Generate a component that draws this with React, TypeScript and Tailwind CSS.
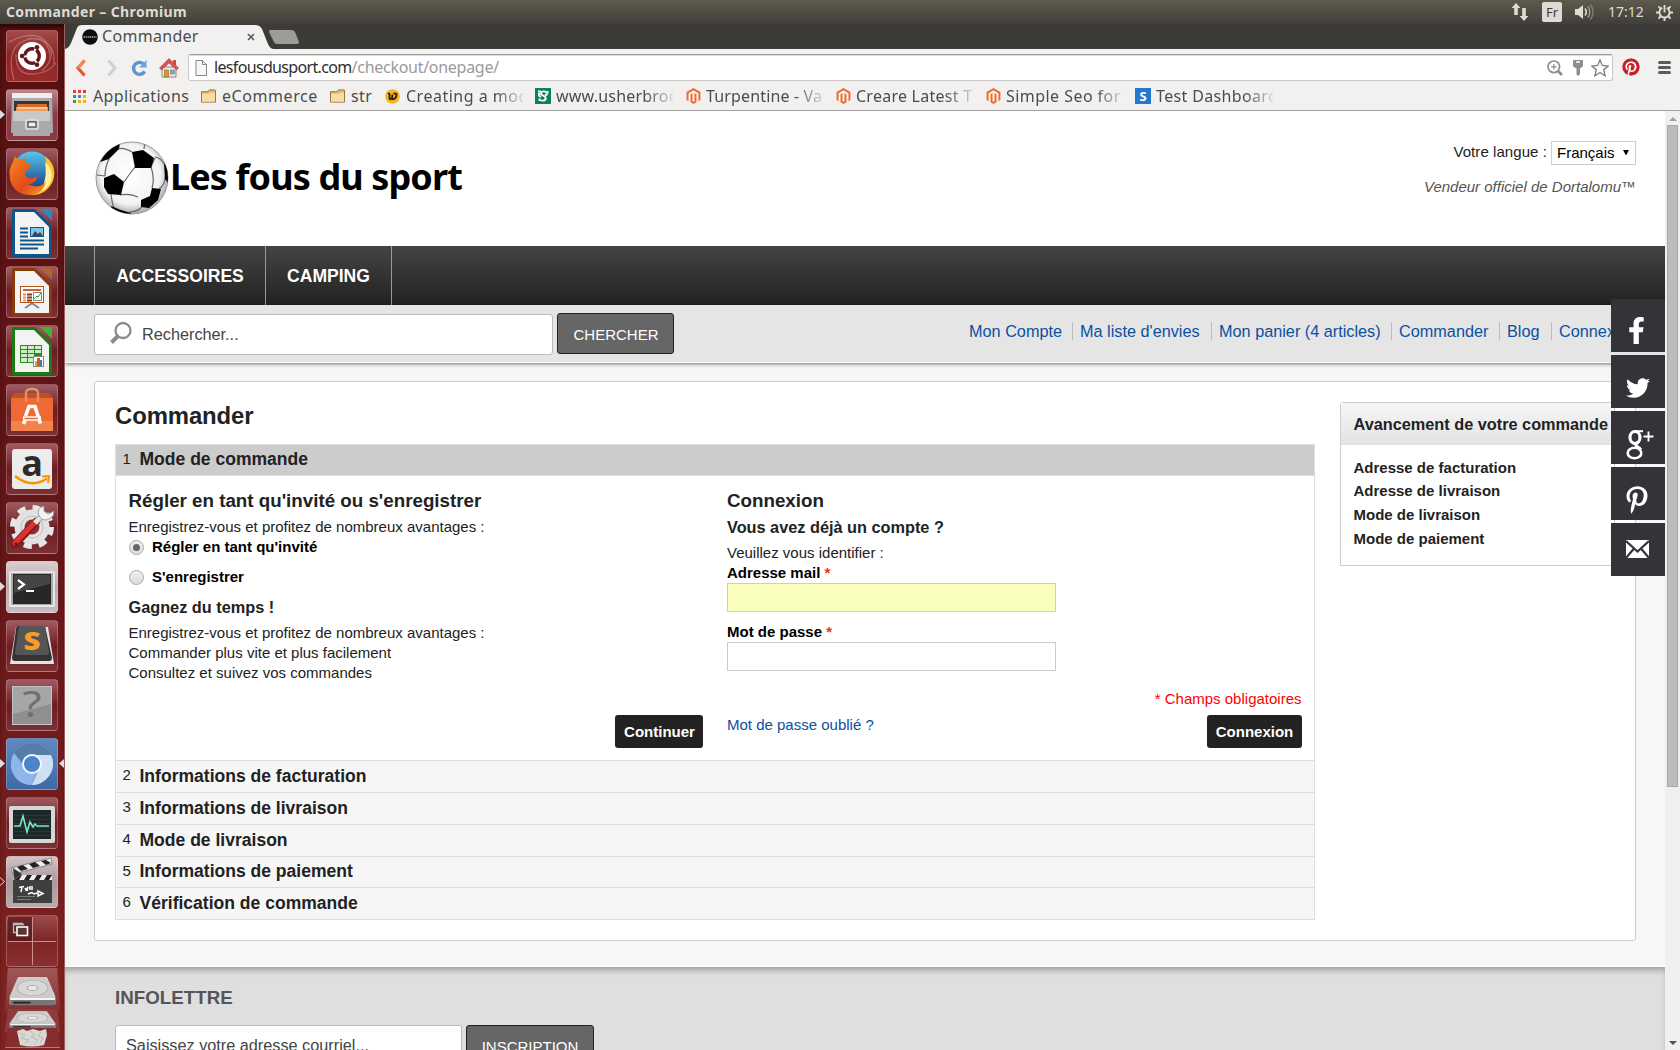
import React from "react";
import {
  FaFacebookF,
  FaMagento,
  FaPinterest,
  FaPinterestP,
  FaTwitter,
} from "react-icons/fa";

const ui = "font-['Noto_Sans',sans-serif]";

function Tile({ bg, children }: { bg?: string; children: React.ReactNode }) {
  return (
    <div
      className={
        "relative h-[52px] w-[52px] shrink-0 overflow-hidden rounded-[4px] border border-white/20 " +
        (bg ?? "bg-linear-to-b from-[#a05a62] via-[#6e1d22] to-[#7a3034]")
      }
    >
      <svg viewBox="0 0 52 52" className="-m-px block h-[52px] w-[52px]">
        {children}
      </svg>
    </div>
  );
}

function OfficeDoc({ dark, light, children }: { dark: string; light: string; children: React.ReactNode }) {
  return (
    <>
      <path d="M8 2H29L46 19V48Q46 50 44 50H8Q6 50 6 48V4Q6 2 8 2Z" fill={dark} />
      <path d="M9 5H28L43 20V47H9Z" fill="#f3f3f3" />
      <path d="M34 2H44Q46 2 46 4V14Z" fill={light} />
      {children}
    </>
  );
}

function Drive() {
  return (
    <>
      <path d="M12 3H40L48 25V34H4V25Z" fill="#cbcbcb" stroke="#e4e4e4" strokeWidth=".8" />
      <ellipse cx="26" cy="15" rx="15" ry="9" fill="#d8d8d8" stroke="#b4b4b4" />
      <ellipse cx="26" cy="15" rx="5" ry="3" fill="#e8e8e8" stroke="#a2a2a2" />
      <path d="M4 26H48V35H4Z" fill="#777" />
      <path d="M4 26H48V29H4Z" fill="#f4f4f4" />
      <path d="M7 31H24V33H7Z" fill="#222" />
    </>
  );
}

function Launcher() {
  return (
    <div className="relative flex w-[65px] shrink-0 flex-col items-center gap-[7px] overflow-hidden border-r border-[#9b6163] bg-linear-to-b from-[#54100f] via-[#651619] to-[#812321] pt-[6px] shadow-[inset_0_5px_5px_-2px_rgba(20,0,0,0.7)]">
      <Tile bg="bg-linear-to-b from-[#a34a4b] via-[#8d2426] to-[#9a2b2d]">
        <g fill="none" stroke="#fff" opacity=".28" strokeWidth="1.2">
          <path d="M8 50Q-2 14 24 9Q44 6 44 30" />
          <path d="M3 12Q30-2 42 14Q51 27 36 41" />
          <path d="M22 8Q50 8 48 34" />
          <path d="M10 24Q9 46 29 44Q42 43 50 33" />
        </g>
        <circle cx="26" cy="26" r="14" fill="#fff" />
        <circle cx="26" cy="26" r="7.3" fill="none" stroke="#641619" strokeWidth="3.4" strokeDasharray="13.3 2" strokeDashoffset="-8" />
        <circle cx="16" cy="26" r="2.3" fill="#641619" />
        <circle cx="31" cy="17.3" r="2.3" fill="#641619" />
        <circle cx="31" cy="34.7" r="2.3" fill="#641619" />
      </Tile>
      <Tile bg="bg-linear-to-b from-[#bb858c] via-[#8b3a44] to-[#8b3a44]">
        <path d="M6 5H46L47 44H5Z" fill="#aaa" />
        <path d="M6 4H46V9H6Z" fill="#eee" />
        <path d="M8 12H43V23H8Z" fill="#353535" />
        <path d="M11 15H41V18H11Z" fill="#d96a27" />
        <path d="M10 18H42V22H10Z" fill="#f39b55" />
        <path d="M12 19H41" stroke="#fff3df" />
        <path d="M7 22H44V47H7Z" fill="#aaa" />
        <path d="M7 22H44V32H7Z" fill="#c9c9c9" />
        <rect x="20" y="31" width="12" height="9" rx="1.5" fill="#aaa" stroke="#e2e2e2" strokeWidth="1.6" />
        <rect x="22" y="33" width="8" height="5" fill="#eee" stroke="#333" />
      </Tile>
      <Tile>
        <defs>
          <linearGradient id="fox" x1="0" y1="0" x2="1" y2="1">
            <stop offset="0" stopColor="#f38b1d" />
            <stop offset=".6" stopColor="#e5481c" />
            <stop offset="1" stopColor="#f6a520" />
          </linearGradient>
          <linearGradient id="globe" x1="0" y1="0" x2="0" y2="1">
            <stop offset="0" stopColor="#58c7ee" />
            <stop offset="1" stopColor="#163a82" />
          </linearGradient>
        </defs>
        <circle cx="26" cy="23" r="19.5" fill="url(#globe)" />
        <path d="M39 8Q52 18 47 33Q40 48 24 47Q38 42 41 30Q42 22 39 8Z" fill="#fbc62c" />
        <path d="M39 14Q48 21 45 33Q42 41 33 44Q42 33 39 14Z" fill="#fff09c" />
        <path d="M9 8Q11 12 16 12L20 9L20 15Q24 16 26 19L20 22Q17 28 23 30Q27 31 31 28Q30 36 22 36Q34 42 40 33Q37 47 23 47Q8 46 4 32Q2 20 7 14Z" fill="url(#fox)" />
      </Tile>
      <Tile>
        <OfficeDoc dark="#0d5689" light="#2e88bd">
          <path d="M14 21.5H22M14 25.5H22M14 29.5H22M14 33.5H38M14 37.5H38M14 41.5H32" stroke="#0d5689" strokeWidth="2" />
          <rect x="24.5" y="20.5" width="13" height="9" fill="#7bc7e8" stroke="#0d5689" />
          <path d="M26 29L29 24L32 27L34 25L37 29Z" fill="#444" />
        </OfficeDoc>
      </Tile>
      <Tile>
        <OfficeDoc dark="#8a3a0c" light="#b0632f">
          <rect x="14.5" y="20.5" width="23" height="16" fill="#fff" stroke="#b4511c" />
          <path d="M17 24H35" stroke="#d36229" strokeWidth="2" />
          <path d="M17 28.5H20M17 31.5H20M17 34.5H20" stroke="#e0926a" strokeWidth="2" />
          <path d="M21 28.5H26M21 31.5H26M21 34.5H26" stroke="#8a3a0c" strokeWidth="2" />
          <rect x="27.5" y="26.5" width="8" height="8" fill="#fff" stroke="#888" />
          <path d="M28 33L31 30L32 31L35 27" stroke="#2d9c22" fill="none" />
          <path d="M25 37V38L19 42M27 37V38L33 42" stroke="#888" strokeWidth="2" fill="none" />
        </OfficeDoc>
      </Tile>
      <Tile>
        <OfficeDoc dark="#1b7a12" light="#41b232">
          <rect x="14" y="20" width="22" height="18" fill="#2b8d21" />
          <g fill="#cdeec4">
            <path d="M15 21h6v3h-6zM22 21h6v3h-6zM29 21h6v3h-6zM15 25h6v3h-6zM22 25h6v3h-6zM29 25h6v3h-6zM15 29h6v3h-6zM22 29h6v3h-6zM15 33h6v4h-6zM22 33h6v4h-6z" />
          </g>
          <rect x="27.5" y="31.5" width="10" height="10" fill="#fff" stroke="#888" />
          <path d="M29 36H31V41H29Z" fill="#e9a321" />
          <path d="M31 33H34V41H31Z" fill="#d6552b" />
          <path d="M34 35H36V41H34Z" fill="#3180c4" />
        </OfficeDoc>
      </Tile>
      <Tile>
        <path d="M5 14L8 9H43L47 14Z" fill="#c04f22" />
        <path d="M5 14H47V47H5Z" fill="#ed6a35" />
        <path d="M5 37H47V47H5Z" fill="#f4824e" />
        <path d="M20 18V9Q20 5 26 5Q32 5 32 9V18" fill="none" stroke="#e98e6a" strokeWidth="2.4" />
        <path d="M19.500 32L23 22.500H29L34.500 39.500M17.500 40L19 36" fill="none" stroke="#fff" strokeWidth="3.6" />
        <path d="M17 34.500H35" stroke="#fff" strokeWidth="4.400" />
        <path d="M18.500 34.500H32" stroke="#ed6a35" strokeWidth="1.300" />
      </Tile>
      <Tile>
        <rect x="6" y="6" width="40" height="40" rx="3" fill="#ececec" />
        <text x="26" y="33" textAnchor="middle" fontFamily="Open Sans, sans-serif" fontWeight="700" fontSize="36" fill="#2b2b2b">a</text>
        <path d="M9 33Q25 46 41 35.500" fill="none" stroke="#f79400" strokeWidth="2.4" />
        <path d="M36 33.500L43 33L42 40" fill="none" stroke="#f79400" strokeWidth="2" />
      </Tile>
      <Tile>
        <circle cx="26" cy="25" r="19" fill="none" stroke="#e6e6e6" strokeWidth="6" strokeDasharray="8 6.920" />
        <circle cx="26" cy="25" r="12.500" fill="#8b3034" stroke="#e2e2e2" strokeWidth="10" />
        <circle cx="26" cy="25" r="11" fill="none" stroke="#bdbdbd" strokeWidth="1" />
        <path d="M9 42L30 20" stroke="#8c1717" strokeWidth="8" strokeLinecap="round" />
        <path d="M9 41L30 19" stroke="#d93434" strokeWidth="5" strokeLinecap="round" />
        <path d="M29 21L36 14" stroke="#999" strokeWidth="6" />
        <path d="M29 21L36 14" stroke="#e6e6e6" strokeWidth="4.500" />
        <path d="M38 4Q30 6 33 14Q37 21 45 16Q48 14 48 9L42 12L38 9Z" fill="#f2f2f2" stroke="#8f8f8f" strokeWidth=".8" />
        <circle cx="10" cy="42" r="1.500" fill="#6a1010" />
      </Tile>
      <Tile bg="bg-linear-to-b from-[#d9cdd0] via-[#b8a8ab] to-[#c8bcbe]">
        <rect x="3" y="10" width="46" height="36" rx="2" fill="#e6e6e6" />
        <rect x="5" y="12" width="42" height="32" fill="#aaa" />
        <rect x="7" y="13" width="38" height="30" fill="#272727" />
        <path d="M8 14H44V23L8 32Z" fill="#454545" />
        <path d="M12 19L18 23.5L12 28" stroke="#fff" strokeWidth="2.2" fill="none" />
        <path d="M20 30H28" stroke="#fff" strokeWidth="2" />
      </Tile>
      <Tile>
        <path d="M10 7H42L48 44H4Z" fill="#e4e4e4" />
        <path d="M13 6H39L46 38Q46 41 43 41H9Q6 41 6 38L10 9Q10 6 13 6Z" fill="#343434" />
        <path d="M13 6H39L43 33Q43 35 41 35H11Q9 35 9 33Z" fill="#555" />
        <text x="26" y="29.500" textAnchor="middle" fontFamily="Open Sans, sans-serif" fontWeight="800" fontSize="24" textLength="17" lengthAdjust="spacingAndGlyphs" fill="#fb9b2b">S</text>
      </Tile>
      <Tile>
        <rect x="6.500" y="7.500" width="39" height="38" fill="#8f8f8f" stroke="#c3c3c3" />
        <path d="M7 8H45V25L7 35Z" fill="#a6a6a6" />
        <text x="26" y="38" textAnchor="middle" fontFamily="Noto Sans, sans-serif" fontSize="36" textLength="19" lengthAdjust="spacingAndGlyphs" fill="#6f6f6f">?</text>
      </Tile>
      <Tile bg="bg-linear-to-b from-[#6288bd] to-[#3e6ba6]">
        <circle cx="26" cy="26" r="21" fill="#82ace2" />
        <path d="M8 15Q15 5 26 5Q38 5 45 17H26L17 26Z" fill="#527ea8" />
        <path d="M26 17H45Q50 28 43 38Q36 47 26 47L34 30Z" fill="#cfe0f5" />
        <path d="M8 15L17 29Q20 36 29 35L25 47Q9 46 5 30Q4 22 8 15Z" fill="#8fb6ea" />
        <circle cx="26" cy="26" r="9" fill="#4c84cb" stroke="#f4f7fc" strokeWidth="2" />
      </Tile>
      <Tile>
        <rect x="3" y="9" width="46" height="37" rx="2" fill="#d6d6d6" />
        <rect x="7" y="13" width="38" height="29" fill="#1e2827" />
        <path d="M8 18.5H44M8 22.500H44M8 26.500H44M8 30.500H44M8 34.500H44M8 38.500H44" stroke="#2e3f3c" strokeWidth=".7" />
        <path d="M8 29H14L17 19L21 35L24 25L27 30L29 27L31 29H43" fill="none" stroke="#76eac7" strokeWidth="1.6" />
      </Tile>
      <Tile bg="bg-linear-to-b from-[#d3c1c5] via-[#a9999c] to-[#b9aaac]">
        <path d="M5 12L45 2L46 8L7 18Z" fill="#eee" stroke="#555" strokeWidth=".6" />
        <path d="M11 11L17 9L22 13L15 15ZM23 8L29 6L34 10L27 12ZM35 5L40 4L45 7L40 9Z" fill="#222" />
        <rect x="7" y="19" width="39" height="28" fill="#3f3f3f" />
        <path d="M7 19H46V24H7Z" fill="#eee" />
        <path d="M11 19H16L13 24H8ZM21 19H26L23 24H18ZM31 19H36L33 24H28ZM41 19H46L43 24H38Z" fill="#222" />
        <path d="M7 12L16 18L8 24Z" fill="#333" stroke="#888" strokeWidth=".6" />
        <path d="M13 31.500L18 30.500M16 31L15 36M19 32L20 34L22 31L21 35M24 30V34M26 30V34M22 38L26 36.500L28 38L31 37M32 35V40L37 37.500Z" fill="none" stroke="#fff" strokeWidth="1.500" />
        <path d="M11 40.500H29M11 43.500H25" stroke="#888" strokeWidth=".8" />
      </Tile>
      <Tile bg="bg-linear-to-b from-[#9a4a4c] via-[#7c2527] to-[#8b2f30]">
        <rect x="2" y="2" width="24" height="25" fill="#4d1518" opacity=".65" />
        <path d="M26.500 2V50M2 26.500H50" stroke="#d18e8e" strokeWidth="1" />
        <path d="M17 8.500H7.500V17.500H10M7 9.500H18" stroke="#bbb" strokeWidth="1.3" fill="none" />
        <rect x="11" y="12" width="10.500" height="8.500" fill="#5a3335" stroke="#fff" strokeWidth="1.6" />
      </Tile>

      <div className="absolute top-[944px] left-[5px] h-[43px] w-[55px] rounded-t-[4px] bg-linear-to-b from-[#a05858] to-[#862e2f] [clip-path:polygon(5%_0,95%_0,100%_100%,0_100%)]">
        <svg viewBox="0 0 52 36" preserveAspectRatio="none" className="mx-auto mt-[7px] block h-[31px] w-[53px]"><Drive /></svg>
      </div>
      <div className="absolute top-[985px] left-[5px] h-[23px] w-[55px] bg-[#8c3c3d] [clip-path:polygon(5%_0,95%_0,100%_100%,0_100%)]">
        <svg viewBox="0 0 52 36" preserveAspectRatio="none" className="mx-auto mt-[1px] block h-[19px] w-[53px]"><Drive /></svg>
      </div>
      <div className="absolute top-[1004px] left-[5px] h-[20px] w-[55px] border-b border-[#bb7777] bg-[#862e2f] [clip-path:polygon(5%_0,95%_0,100%_100%,0_100%)]">
        <svg viewBox="0 0 55 20" className="block h-[20px] w-[55px]">
          <path d="M12 3L18 1L22 3L28 1L35 3L41 1L42 7L39 17Q27 20 15 17Z" fill="#d8d8d4" />
          <path d="M14 5L20 7L16 10L24 12L20 15M25 3L30 7L26 9L33 12L29 16M36 4L33 8L38 10L35 15" fill="none" stroke="#b9b9b5" strokeWidth="1" />
        </svg>
      </div>

      <svg viewBox="0 0 65 1026" className="pointer-events-none absolute top-0 left-0 h-[1026px] w-[65px]" fill="#dcdcdc">
        <path d="M0 86L5 90.500L0 95Z" />
        <path d="M0 558L5 562.500L0 567Z" />
        <path d="M0 735L5 739.500L0 744Z" />
        <path d="M64 735L59 739.500L64 744Z" />
        <path d="M0 853.500L4.500 857.500L0 861.500" fill="none" stroke="#dcdcdc" />
      </svg>
    </div>
  );
}

function TopPanel() {
  return (
    <div className={"flex h-[24px] shrink-0 items-center justify-between bg-linear-to-b from-[#5d5a4e] to-[#403f3a] pr-[7px] pl-[6px] text-[#dfdbd2] " + ui}>
      <span className="text-[14px] leading-[24px] font-bold tracking-[0.37px]">Commander – Chromium</span>
      <div className="flex items-center">
        <svg viewBox="0 0 18 18" className="mr-[13px] h-[18px] w-[18px]" fill="#dfdbd2">
          <path d="M5 0L9.500 5H6.800V12H3.200V5H.5ZM13 18L8.500 13H11.200V5H14.800V13H17.500Z" />
        </svg>
        <span className="mr-[13px] flex h-[20px] w-[20px] items-center justify-center rounded-[2px] bg-[#dfdbd2] text-[13px] leading-none text-[#3c3b37]">Fr</span>
        <svg viewBox="0 0 20 18" className="mr-[13px] h-[18px] w-[20px]">
          <path d="M0 6H3L8 2V16L3 12H0Z" fill="#dfdbd2" />
          <path d="M10 5.500Q12.500 9 10 12.500" fill="none" stroke="#dfdbd2" strokeWidth="1.6" />
          <path d="M13 3.500Q16.500 9 13 14.500" fill="none" stroke="#a19e94" strokeWidth="1.4" />
          <path d="M15.500 1.500Q20.500 9 15.500 16.500" fill="none" stroke="#817e75" strokeWidth="1.4" />
        </svg>
        <span className="mr-[13px] w-[35px] text-[14px] leading-[24px] whitespace-nowrap">17:12</span>
        <svg viewBox="0 0 18 18" className="h-[17px] w-[17px]" fill="none" stroke="#dfdbd2">
          <path d="M6.500 4.100A5.400 5.400 0 1 0 11.500 4.100" strokeWidth="2" />
          <path d="M9 1V9" strokeWidth="2" />
          <path d="M9 14.500V18M0 9H3.500M14.500 9H18M2.600 2.600L5 5M15.400 2.600L13 5M2.600 15.400L5 13M15.400 15.400L13 13" strokeWidth="2" />
        </svg>
      </div>
    </div>
  );
}

function TabStrip() {
  return (
    <div className={"relative flex h-[25px] shrink-0 bg-[#3c3b37] " + ui}>
      <svg viewBox="0 0 240 25" className="absolute top-0 left-0 h-[25px] w-[240px]">
        <path d="M0 25Q4 24 6 19L12 4Q13 1 17 1H190Q195 1 197 5L203 20Q205 25 209 25Z" fill="#f2f1f0" />
        <path d="M205 6H226Q229 6 230 8L234 18Q234 20 232 20H212Q210 20 209 18L204 8Q204 6 205 6Z" fill="#9d9c99" />
      </svg>
      <div className="relative flex h-[25px] w-[200px] items-center pl-[17px]">
        <svg viewBox="0 0 16 16" className="h-[16px] w-[16px]">
          <circle cx="8" cy="8" r="7.800" fill="#0a0f0c" />
          <path d="M1.500 8H14.500" stroke="#7d8480" strokeWidth="2" strokeDasharray="1.500 .6" />
        </svg>
        <span className="mt-[-1px] ml-[4px] w-[145px] text-[16px] leading-[24px] tracking-[0.3px] text-[#4c4c4c]">Commander</span>
        <svg viewBox="0 0 8 8" className="mt-px h-[8px] w-[8px] shrink-0">
          <path d="M1 1L7 7M7 1L1 7" stroke="#5c5c5c" strokeWidth="1.700" />
        </svg>
      </div>
    </div>
  );
}

function Toolbar() {
  return (
    <div className={"flex h-[35px] shrink-0 items-start bg-[#f2f1f0] pt-[5px] " + ui}>
      <div className="flex h-[27px] w-[123px] shrink-0 items-center pl-[10px]">
        <svg viewBox="0 0 12 18" className="h-[18px] w-[12px]">
          <path d="M9.500 1.500L3 9L9.500 16.500" fill="none" stroke="#e4582b" strokeWidth="3.200" />
          <path d="M9.500 1.500L3 9" fill="none" stroke="#f0904c" strokeWidth="2.600" />
        </svg>
        <svg viewBox="0 0 12 18" className="ml-[19px] h-[18px] w-[12px]">
          <path d="M2.500 1.500L9 9L2.500 16.500" fill="none" stroke="#d0cfcd" strokeWidth="3" />
        </svg>
        <svg viewBox="0 0 18 18" className="ml-[13px] h-[18px] w-[17px]">
          <path d="M14.500 12.500A6.300 6.300 0 1 1 13 4.500" fill="none" stroke="#5b94d2" strokeWidth="3.600" />
          <path d="M16.500 .5V8.500H8.500Z" fill="#6da5de" />
        </svg>
        <svg viewBox="0 0 20 20" className="ml-[11px] h-[20px] w-[20px]">
          <path d="M3 9H17V19H3Z" fill="#f0ede8" stroke="#8c8680" />
          <path d="M14 2H17V7H14Z" fill="#c94c48" />
          <path d="M10 .5L19.500 10L17.500 12L10 5L2.500 12L.5 10Z" fill="#d9534f" stroke="#a83a36" strokeWidth=".6" />
          <rect x="5.500" y="12" width="4" height="7" fill="#d89c2c" stroke="#8c6316" strokeWidth=".6" />
          <rect x="11.500" y="12" width="4" height="4" fill="#7da7d9" stroke="#777" strokeWidth=".6" />
        </svg>
      </div>
      <div className="flex h-[27px] w-[1425px] shrink-0 items-center rounded-[3px] border border-[#c9c8c6] border-t-[#9c9b99] bg-white pr-[3px] pl-[6px] shadow-[inset_0_1px_0_#dedede]">
        <svg viewBox="0 0 12 16" className="h-[16px] w-[12px]">
          <path d="M1 .5H7.500L11.500 4.500V15.500H1Z" fill="#f7f7f7" stroke="#878787" />
          <path d="M7.500 .5V4.500H11.500" fill="none" stroke="#878787" />
        </svg>
        <span className="ml-[7px] grow text-[16px] leading-[25px] text-[#9a9a9a]">
          <span className="tracking-[-0.66px] text-[#2e2e2e]">lesfousdusport.com</span>
          <span className="tracking-[-0.28px]">/checkout/onepage/</span>
        </span>
        <svg viewBox="0 0 16 16" className="mr-[10px] h-[16px] w-[16px]" fill="none" stroke="#8c8c8c">
          <circle cx="6.800" cy="6.800" r="5.800" strokeWidth="1.700" />
          <path d="M11 11L15 15" strokeWidth="2.600" />
          <path d="M4 6.800H9.600M6.800 4V9.600" strokeWidth="1.200" />
        </svg>
        <svg viewBox="0 0 10 16" className="mr-[8px] h-[16px] w-[10px]">
          <path d="M0 1Q0 0 1 0H9Q10 0 10 1V6L8 8H7V14L5 16L3.500 14.500V8H2L0 6Z" fill="#8c8c8c" />
          <path d="M3 2H7" stroke="#fff" strokeWidth="1.500" />
        </svg>
        <svg viewBox="0 0 18 18" className="h-[18px] w-[18px]">
          <path d="M9 1L11.300 6.500L17.200 7L12.700 10.800L14.100 16.700L9 13.500L3.900 16.700L5.300 10.800L.8 7L6.700 6.500Z" fill="none" stroke="#7b7b7b" strokeWidth="1.300" />
        </svg>
      </div>
      <FaPinterest className="mt-[4px] ml-[9px] h-[18px] w-[18px] shrink-0 rounded-full bg-white text-[#cb2027]" />
      <div className="mt-[7px] ml-[18px] flex h-[13px] w-[13px] flex-col justify-between">
        <span className="h-[3px] rounded-sm bg-[#5b5b5b]" />
        <span className="h-[3px] rounded-sm bg-[#5b5b5b]" />
        <span className="h-[3px] rounded-sm bg-[#5b5b5b]" />
      </div>
    </div>
  );
}

function FolderIcon() {
  return (
    <svg viewBox="0 0 16 14" className="h-[14px] w-[15px] shrink-0">
      <path d="M.5 2.500V13.500H15.500V1.500Q15.500 .5 14.500 .5H9L7.500 2.500Z" fill="#e9bd77" stroke="#86683a" />
      <path d="M1 4.500H10L11 3.500H15V13H1Z" fill="#fbdca3" />
    </svg>
  );
}

const fade = "overflow-hidden [mask-image:linear-gradient(to_right,black_76%,transparent_104%)]";

function Bookmark({ icon, label, gap, width, fit = "", fades = true }: { icon: React.ReactNode; label: string; gap: string; width: string; fit?: string; fades?: boolean }) {
  return (
    <div className={"flex shrink-0 items-center " + gap}>
      {icon}
      <span className={"text-[16px] leading-[24px] whitespace-nowrap " + width + " " + fit + " " + (fades ? fade : "")}>{label}</span>
    </div>
  );
}

function BookmarksBar() {
  const magento = <FaMagento className="mr-[5px] h-[16px] w-[15px] shrink-0 text-[#f06a2e]" />;
  return (
    <div className={"flex h-[27px] shrink-0 items-start border-b border-[#a3a2a0] bg-[#f2f1f0] pl-[8px] text-[#4c4c4c] " + ui}>
      <Bookmark
        gap=""
        width="w-[108px]"
        fit="tracking-[0.35px]"
        fades={false}
        label="Applications"
        icon={
          <svg viewBox="0 0 13 13" className="mr-[7px] h-[13px] w-[13px] shrink-0">
            <path d="M0 0h3v3H0zM5 0h3v3H5zM10 0h3v3h-3z" fill="#ea3c37" />
            <path d="M0 5h3v3H0z" fill="#2aa35a" />
            <path d="M5 5h3v3H5z" fill="#2f86f6" />
            <path d="M10 5h3v3h-3z" fill="#f6b300" />
            <path d="M0 10h3v3H0z" fill="#2aa35a" />
            <path d="M5 10h3v3H5zM10 10h3v3h-3z" fill="#f6b300" />
          </svg>
        }
      />
      <Bookmark gap="gap-[6px]" width="w-[108px]" fit="tracking-[0.57px]" fades={false} label="eCommerce" icon={<FolderIcon />} />
      <Bookmark gap="gap-[6px]" width="w-[34px]" fit="tracking-[0.4px]" fades={false} label="str" icon={<FolderIcon />} />
      <Bookmark
        gap="gap-[6px]"
        width="w-[117px]"
        fit="tracking-[0.5px]"
        label="Creating a mod"
        icon={
          <svg viewBox="0 0 16 16" className="h-[15px] w-[15px] shrink-0">
            <circle cx="8" cy="8" r="7.800" fill="#fbb51c" />
            <path d="M3 5Q5 4 5 7Q4 11 6 11Q8 10 8 6Q7 11 9 11Q13 9 12 5M9 5Q11 4 13 6" fill="none" stroke="#222" strokeWidth="1.900" />
          </svg>
        }
      />
      <Bookmark
        gap="ml-[12px] gap-[5px]"
        width="w-[117px]"
        fit="tracking-[0.2px]"
        label="www.usherbroo"
        icon={
          <svg viewBox="0 0 16 16" className="h-[16px] w-[16px] shrink-0">
            <path d="M0 0H16V16H0Z" fill="#0b8358" />
            <path d="M11.500 4.500Q9 2.500 6.500 4Q5 6 8 7.500Q11.500 9 10.500 11.500Q8.500 13.500 5 12M3 3.500H6M4 5V7.500L6 9M12.500 3V6M4.500 10.500V13M10 7L12.500 6.500" fill="none" stroke="#fff" strokeWidth="1.900" />
          </svg>
        }
      />
      <Bookmark gap="ml-[13px]" width="w-[117px]" fit="tracking-[0.15px]" label="Turpentine - Va" icon={magento} />
      <Bookmark gap="ml-[13px]" width="w-[117px]" fit="tracking-[0.25px]" label="Creare Latest T" icon={magento} />
      <Bookmark gap="ml-[13px]" width="w-[117px]" fit="tracking-[0.45px]" label="Simple Seo for" icon={magento} />
      <Bookmark
        gap="ml-[12px] gap-[5px]"
        width="w-[117px]"
        fit="tracking-[0.35px]"
        label="Test Dashboard"
        icon={
          <span className="flex h-[16px] w-[16px] shrink-0 items-center justify-center bg-[#2479cc] text-[13px] leading-none font-bold text-white">S</span>
        }
      />
    </div>
  );
}

function Ball() {
  return (
    <svg viewBox="0 0 74 74" className="ml-px h-[74px] w-[74px] shrink-0">
      <defs>
        <radialGradient id="ball" cx=".48" cy=".45" r=".55">
          <stop offset="0" stopColor="#fff" />
          <stop offset=".75" stopColor="#f3f3f3" />
          <stop offset="1" stopColor="#a9a9a9" />
        </radialGradient>
        <clipPath id="ballclip">
          <circle cx="37" cy="37" r="36" />
        </clipPath>
      </defs>
      <circle cx="37" cy="37" r="36" fill="url(#ball)" stroke="#8a8a8a" strokeWidth=".8" />
      <g clipPath="url(#ballclip)">
        <path
          d="M37 11Q28 6 24 8M14 18Q10 26 10 35M49 8L50 0M40 26Q36 31 29 41M56 26L60 17M56 26Q60 37 57 47M60 16Q66 17 69 23M10 35L2 34M16 53Q17 62 19 67M43 56Q35 52 25 54M47 66Q42 71 34 71M64 48Q70 44 70 36"
          fill="none"
          stroke="#666"
          strokeWidth="1.200"
        />
        <path d="M37 11L48 9L59 17L56 27L40 27Z" />
        <path d="M9 37L19 33L29 41L26 54L13 53L9 46Z" />
        <path d="M57 47L66 48L63 59L54 67L46 66L46 59L55 55Z" />
        <path d="M5 21Q12 8 25 2L24 8L14 18L8 20Z" />
        <path d="M16 65L26 69L36 72V75H18Z" />
        <path d="M69 22L75 30V45L70 38Z" />
      </g>
    </svg>
  );
}

function SiteHeader() {
  return (
    <div className="flex h-[135px] shrink-0 justify-between bg-white pr-[29px] pl-[29px]">
      <div className="flex h-[74px] pt-[30px]">
        <Ball />
        <div className="mt-[11px] ml-px h-[50px] text-[36px] leading-[50px] font-bold tracking-[-0.88px] whitespace-nowrap text-black font-['Noto_Sans',sans-serif]">
          Les fous du sport
        </div>
      </div>
      <div className="flex flex-col items-end pt-[30px] text-[15px] text-[#222]">
        <div className="flex h-[24px] items-center">
          <span className="mt-[-2px] mr-[4px] leading-[22px] tracking-[0.07px]">Votre langue :</span>
          <span className="flex h-[24px] w-[85px] items-center justify-between border border-[#ccc] pr-[6px] pl-[5px] text-black">
            <span className="text-[15px]">Français</span>
            <svg viewBox="0 0 7 7" className="mt-[-2px] h-[7px] w-[6px]"><path d="M0 .5H7L3.500 7Z" /></svg>
          </span>
        </div>
        <div className="mt-[12px] h-[20px] leading-[20px] text-[#555] italic">Vendeur officiel de Dortalomu™</div>
      </div>
    </div>
  );
}

const quickLinks: [string, string][] = [
  ["Mon Compte", "w-[104px] border-r mr-[7px]"],
  ["Ma liste d'envies", "w-[132px] border-r mr-[7px]"],
  ["Mon panier (4 articles)", "w-[173px] border-r mr-[7px]"],
  ["Commander", "w-[101px] border-r mr-[7px]"],
  ["Blog", "w-[45px] border-r mr-[7px]"],
  ["Connexion", "w-[77px]"],
];

function SearchBar() {
  return (
    <div className="relative z-10 flex h-[58px] shrink-0 border-b border-white bg-[#e5e5e5] pl-[29px] shadow-[0_1px_4px_rgba(0,0,0,0.55)]">
      <div className="mt-[9px] flex h-[41px] w-[459px] rounded-[3px] border border-[#bbb] bg-white">
        <svg viewBox="0 0 24 24" className="mt-[6px] ml-[14px] h-[24px] w-[24px]" fill="none" stroke="#8b8b8b">
          <circle cx="14" cy="9.500" r="7.500" strokeWidth="2.300" />
          <path d="M9 15L2.500 21.500" strokeWidth="4" />
        </svg>
        <span className="ml-[9px] text-[16.250px] leading-[38px] text-[#444]">Rechercher...</span>
      </div>
      <div className="mt-[8px] ml-[4px] flex h-[41px] w-[117px] items-center justify-center rounded-[3px] border border-[#222] bg-[#666] pt-[3px] pl-px text-[15px] text-white">CHERCHER</div>
      <div className="mt-[17px] ml-[295px] flex h-[18px] shrink-0 text-[16.250px] leading-[19px] whitespace-nowrap text-[#0a50a1]">
        {quickLinks.map(([label, cls]) => (
          <span key={label} className={"shrink-0 border-[#bbb] " + cls}>{label}</span>
        ))}
      </div>
    </div>
  );
}

const laterSteps: [string, string, string, string, string][] = [
  ["2", "Informations de facturation", "h-[32px]", "leading-[28px]", "leading-[30px]"],
  ["3", "Informations de livraison", "h-[32px]", "leading-[28px]", "leading-[30px]"],
  ["4", "Mode de livraison", "h-[32px]", "leading-[28px]", "leading-[30px]"],
  ["5", "Informations de paiement", "h-[31px]", "leading-[28px]", "leading-[28px]"],
  ["6", "Vérification de commande", "h-[32px]", "leading-[28px]", "leading-[30px]"],
];

function RadioDot({ on }: { on?: boolean }) {
  return (
    <span className="mr-[8px] ml-[0.5px] flex h-[15px] w-[15px] items-center justify-center rounded-full border border-[#a9a9a9] bg-linear-to-b from-[#f0f0f0] to-[#dcdcdc]">
      {on && <span className="h-[7px] w-[7px] rounded-full bg-[#666]" />}
    </span>
  );
}

function DarkButton({ children, className }: { children: React.ReactNode; className: string }) {
  return (
    <div className={"flex h-[33px] items-center justify-center rounded-[3px] bg-[#222] text-[15px] font-bold text-white " + className}>{children}</div>
  );
}

function Checkout() {
  return (
    <div className="w-[1200px] shrink-0">
      <h1 className="h-[30px] text-[23.900px] leading-[32px] font-bold tracking-[-0.1px]">Commander</h1>
      <div className="mt-[14px] h-[476px] border border-[#ddd] border-b-0">
        <div className="flex h-[31px] border-b border-[#ddd] bg-[#ccc]">
          <span className="ml-[6.500px] w-[17px] text-[15px] leading-[28px]">1</span>
          <span className="text-[17.550px] leading-[28px] font-bold">Mode de commande</span>
        </div>
        <div className="flex h-[284px] bg-white pt-[13px] pl-[12.500px] text-[15px] leading-[20px]">
          <div className="w-[598.500px] shrink-0">
            <h3 className="text-[18.750px] leading-[24px] font-bold">Régler en tant qu'invité ou s'enregistrer</h3>
            <p className="mt-[4px]">Enregistrez-vous et profitez de nombreux avantages :</p>
            <div className="flex h-[20px] items-center font-bold text-black"><RadioDot on />Régler en tant qu'invité</div>
            <div className="mt-[10px] flex h-[20px] items-center font-bold text-black"><RadioDot />S'enregistrer</div>
            <h4 className="mt-[10px] text-[16.300px] leading-[21px] font-bold">Gagnez du temps !</h4>
            <p className="mt-[5px]">Enregistrez-vous et profitez de nombreux avantages :</p>
            <p>Commander plus vite et plus facilement</p>
            <p>Consultez et suivez vos commandes</p>
            <DarkButton className="mt-[32px] ml-[486.500px] w-[88px] pl-px">Continuer</DarkButton>
          </div>
          <div className="w-[574.500px]">
            <h3 className="text-[18.750px] leading-[24px] font-bold">Connexion</h3>
            <h4 className="mt-[4px] text-[16.300px] leading-[21px] font-bold">Vous avez déjà un compte ?</h4>
            <p className="mt-[5px]">Veuillez vous identifier :</p>
            <p className="font-bold text-black">Adresse mail <span className="text-[#eb340a]">*</span></p>
            <div className="h-[29px] w-[329px] border border-[#ccc] bg-[#faffbd]" />
            <p className="mt-[10px] font-bold text-black">Mot de passe <span className="text-[#eb340a]">*</span></p>
            <div className="h-[29px] w-[329px] border border-[#ccc] bg-white" />
            <p className="mt-[18px] text-right text-[#f00]">* Champs obligatoires</p>
            <div className="mt-[6px] mr-[-0.5px] flex justify-between">
              <span className="text-[#0a50a1]">Mot de passe oublié ?</span>
              <DarkButton className="w-[95px]">Connexion</DarkButton>
            </div>
          </div>
        </div>
        {laterSteps.map(([n, title, h, numLead, titleLead]) => (
          <div key={n} className={"flex border-t border-[#ddd] bg-[#f6f6f6] " + h}>
            <span className={"ml-[6.500px] w-[17px] text-[15px] " + numLead}>{n}</span>
            <span className={"text-[17.550px] font-bold " + titleLead}>{title}</span>
          </div>
        ))}
        <div className="h-px bg-[#ddd]" />
      </div>
    </div>
  );
}

function Progress() {
  return (
    <div className="mt-[2px] ml-[25px] h-[164px] w-[275px] shrink-0 rounded-t-[3px] border border-[#ccc] font-bold">
      <div className="h-[42px] bg-linear-to-b from-[#f6f6f6] to-[#e3e3e3] pl-[12.500px] text-[16.300px] leading-[42px] whitespace-nowrap">Avancement de votre commande</div>
      <ul className="pt-[11px] pl-[12.500px] text-[15px]">
        <li className="h-[23px] leading-[24px]">Adresse de facturation</li>
        <li className="h-[24px] leading-[24px]">Adresse de livraison</li>
        <li className="h-[24px] leading-[24px]">Mode de livraison</li>
        <li className="h-[24px] leading-[24px]">Mode de paiement</li>
      </ul>
    </div>
  );
}

function SocialBar() {
  const cell = "flex h-[53px] w-[54px] justify-center bg-[#33343a] text-white";
  return (
    <div className="absolute top-[188px] right-0 z-20 flex flex-col gap-[3px]">
      <div className={cell}><FaFacebookF className="mt-[18px] ml-[-3px] h-[27px] w-[17px]" /></div>
      <div className={cell}><FaTwitter className="mt-[21px] ml-[-1px] h-[24px] w-[24px]" /></div>
      <div className={cell}>
        <svg viewBox="0 0 28 30" className="mt-[19px] ml-[3px] h-[30px] w-[28px]" fill="none" stroke="#fff">
          <ellipse cx="9" cy="7.500" rx="5" ry="6" strokeWidth="3.200" />
          <path d="M9.500 1.200H17" strokeWidth="2" />
          <path d="M12 12.500Q8.500 15 11 16.500Q14 18 15 19.500" strokeWidth="3" />
          <ellipse cx="8.500" cy="23" rx="6.800" ry="5.200" strokeWidth="2.600" />
          <path d="M22.500 1.500V11.500M17.500 6.500H27.500" strokeWidth="1.900" />
        </svg>
      </div>
      <div className={cell}><FaPinterestP className="mt-[19px] ml-[-2px] h-[28px] w-[24px]" /></div>
      <div className={cell}>
        <svg viewBox="0 0 23 18" className="mt-[17px] ml-[-1px] h-[18px] w-[23px]">
          <path d="M0 0H23V18H0Z" fill="#fff" />
          <path d="M0 1L11.500 11.500L23 1M0 18L8 8.500M23 18L15 8.500" fill="none" stroke="#33343a" strokeWidth="2.200" />
        </svg>
      </div>
    </div>
  );
}

function Page() {
  return (
    <div className="relative flex w-[1600px] shrink-0 flex-col overflow-hidden bg-[#f7f7f7] font-['Liberation_Sans',Arial,sans-serif] text-[#222]">
      <SiteHeader />
      <div className="flex h-[59px] shrink-0 bg-linear-to-b from-[#444] to-[#222] pl-[29px] text-[17.550px] leading-[60px] font-bold text-white">
        <span className="w-[172px] border-x border-[#999] text-center">ACCESSOIRES</span>
        <span className="w-[126px] border-r border-[#999] text-center">CAMPING</span>
      </div>
      <SearchBar />
      <div className="mt-[18px] ml-[29px] flex h-[560px] w-[1542px] shrink-0 rounded-[3px] border border-[#ccc] bg-white pt-[18px] pl-[20px]">
        <Checkout />
        <Progress />
      </div>
      <div className="mt-[25px] h-px shrink-0 bg-white" />
      <div className="h-[100px] shrink-0 bg-[#dfdfdf] pl-[50px] shadow-[inset_0_5px_6px_-2px_rgba(0,0,0,0.3)]">
        <h2 className="pt-[20px] text-[18.750px] leading-[22px] font-bold text-[#555]">INFOLETTRE</h2>
        <div className="mt-[16px] flex">
          <div className="h-[41px] w-[347px] rounded-[3px] border border-[#bbb] bg-white pl-[10px] text-[16.250px] leading-[39px] text-[#444]">Saisissez votre adresse courriel...</div>
          <div className="ml-[4px] h-[41px] w-[128px] rounded-[3px] border border-[#222] bg-[#666] text-center text-[15px] leading-[42px] text-white">INSCRIPTION</div>
        </div>
      </div>
      <SocialBar />
    </div>
  );
}

function ScrollBar() {
  return (
    <div className="flex w-[15px] shrink-0 flex-col items-center justify-between bg-[#f0f0f0] pb-[5px]">
      <div className="flex flex-col items-center">
        <svg viewBox="0 0 8 4" className="mt-[6px] h-[4px] w-[8px]"><path d="M4 0L8 4H0Z" fill="#a0a0a0" /></svg>
        <div className="mt-[4px] h-[662px] w-[11px] border border-[#a8a8a8] bg-[#bcbcbc]" />
      </div>
      <svg viewBox="0 0 8 4" className="h-[4px] w-[8px]"><path d="M0 0H8L4 4Z" fill="#505050" /></svg>
    </div>
  );
}

export default function App() {
  return (
    <div className="flex h-[1050px] w-[1680px] flex-col overflow-hidden bg-[#f2f1f0]">
      <TopPanel />
      <div className="flex h-[1026px] shrink-0">
        <Launcher />
        <div className="flex h-[1026px] w-[1615px] shrink-0 flex-col overflow-hidden">
          <TabStrip />
          <Toolbar />
          <BookmarksBar />
          <div className="flex min-h-0 flex-1">
            <Page />
            <ScrollBar />
          </div>
        </div>
      </div>
    </div>
  );
}
